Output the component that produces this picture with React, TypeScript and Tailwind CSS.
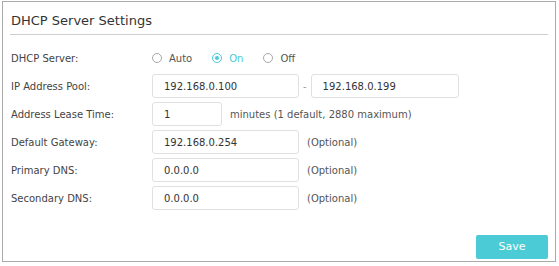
import React from "react";

const font = { fontFamily: '"DejaVu Sans", Verdana, sans-serif' };

function Radio({ label, checked }: { label: string; checked?: boolean }) {
  return (
    <div className="flex items-center">
      <span
        className={
          checked
            ? "w-[10px] h-[10px] rounded-full border border-[#4acbd6] flex items-center justify-center"
            : "w-[10px] h-[10px] rounded-full border border-[#a8a8a8]"
        }
      >
        {checked ? <span className="w-[4px] h-[4px] rounded-full bg-[#4acbd6]" /> : null}
      </span>
      <span className={checked ? "ml-[7px] text-[#4acbd6]" : "ml-[7px] text-[#555]"}>{label}</span>
    </div>
  );
}

function Input({ value, w }: { value: string; w: string }) {
  return (
    <div className={`${w} h-[24px] border border-[#e0e0e0] rounded-[3px] flex items-center pl-[11px] text-[#333]`}>
      {value}
    </div>
  );
}

function Row({ label, children }: { label: string; children: React.ReactNode }) {
  return (
    <div className="flex items-center h-[28px]">
      <div className="w-[141px] text-[#444]">{label}</div>
      <div className="flex items-center">{children}</div>
    </div>
  );
}

export default function App() {
  return (
    <div className="w-[559px] h-[266px] bg-white pt-[1px] pl-[2px]" style={font}>
      <div className="w-[554px] h-[261px] border border-[#aaa] flex flex-col px-[7px]">
        <div className="h-[33px] border-b border-[#cfcfcf] flex items-end pb-[4px] text-[13px] text-[#333] pl-[1px]">
          DHCP Server Settings
        </div>
        <div className="mt-[9px] pl-[1px] text-[10px]">
          <Row label="DHCP Server:">
            <div className="flex items-center gap-[20px]">
              <Radio label="Auto" />
              <Radio label="On" checked />
              <Radio label="Off" />
            </div>
          </Row>
          <Row label="IP Address Pool:">
            <Input value="192.168.0.100" w="w-[147px]" />
            <span className="mx-[4px] text-[#999]">-</span>
            <Input value="192.168.0.199" w="w-[148px]" />
          </Row>
          <Row label="Address Lease Time:">
            <Input value="1" w="w-[70px]" />
            <span className="ml-[8px] text-[#555]">minutes (1 default, 2880 maximum)</span>
          </Row>
          <Row label="Default Gateway:">
            <Input value="192.168.0.254" w="w-[147px]" />
            <span className="ml-[8px] text-[#555]">(Optional)</span>
          </Row>
          <Row label="Primary DNS:">
            <Input value="0.0.0.0" w="w-[147px]" />
            <span className="ml-[8px] text-[#555]">(Optional)</span>
          </Row>
          <Row label="Secondary DNS:">
            <Input value="0.0.0.0" w="w-[147px]" />
            <span className="ml-[8px] text-[#555]">(Optional)</span>
          </Row>
        </div>
        <div className="mt-auto mb-[2px] flex justify-end">
          <button className="w-[72px] h-[24px] rounded-[2px] bg-[#4acbd6] text-white text-[11px]">Save</button>
        </div>
      </div>
    </div>
  );
}
